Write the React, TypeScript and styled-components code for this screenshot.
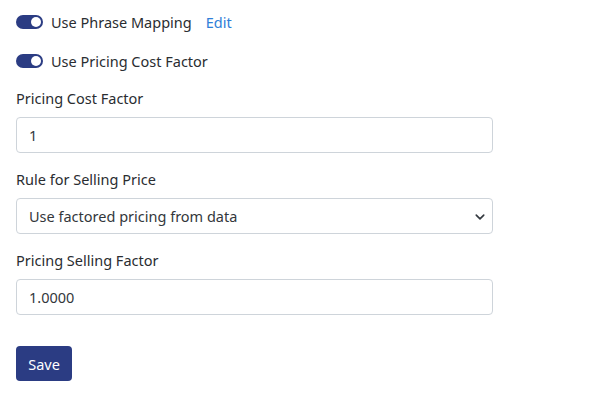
import { createGlobalStyle } from "styled-components";
import styled from "styled-components";

const Global = createGlobalStyle`
  body { margin: 0; background: #fff; font-family: "Noto Sans", "Open Sans", sans-serif; color: #2a2d31; }
  * { box-sizing: border-box; }
`;

const Page = styled.div`
  padding: 11px 16px 16px;
  width: 509px;
`;

const SwitchRow = styled.label<{ $gap: number }>`
  display: flex; align-items: center;
  height: 22px; margin-bottom: ${({ $gap }) => $gap}px;
  font-size: 14.5px; cursor: pointer;
`;

const Track = styled.span`
  position: relative; display: inline-block;
  width: 27px; height: 14px; border-radius: 7px;
  background: #2b3c83; margin-right: 8px; flex: none;
`;

const Knob = styled.span`
  position: absolute; top: 2px; right: 2px;
  width: 10px; height: 10px; border-radius: 50%; background: #fff;
`;

const EditLink = styled.a`
  color: #2f7ed8; margin-left: 14px; text-decoration: none;
`;

const Group = styled.div`
  margin-bottom: 16px;
`;

const Label = styled.div`
  font-size: 14.5px; line-height: 21px; margin-bottom: 8px;
`;

const Field = styled.input`
  display: block; width: 100%; height: 36px;
  padding: 0 12px; border: 1px solid #ced4da; border-radius: 4px;
  font: inherit; font-size: 14.5px; color: #33373b; background: #fff;
`;

const SelectWrap = styled.div`
  position: relative; height: 36px;
  border: 1px solid #ced4da; border-radius: 4px;
  display: flex; align-items: center; padding: 0 12px;
  font-size: 14.5px; color: #33373b;
`;

const Chevron = styled.svg`
  position: absolute; right: 7px; top: 13px;
`;

const SaveBtn = styled.button`
  margin-top: 15px; width: 56px; height: 35px;
  background: #2b3c83; color: #fff; border: none; border-radius: 4px;
  font: inherit; font-size: 14.5px;
`;

function Switch({ label, gap, edit }: { label: string; gap: number; edit?: boolean }) {
  return (
    <SwitchRow $gap={gap}>
      <Track><Knob /></Track>
      {label}
      {edit && <EditLink href="#">Edit</EditLink>}
    </SwitchRow>
  );
}

export default function App() {
  return (
    <Page>
      <Global />
      <Switch label="Use Phrase Mapping" gap={17} edit />
      <Switch label="Use Pricing Cost Factor" gap={16} />
      <Group>
        <Label>Pricing Cost Factor</Label>
        <Field defaultValue="1" />
      </Group>
      <Group>
        <Label>Rule for Selling Price</Label>
        <SelectWrap>
          Use factored pricing from data
          <Chevron width="10" height="10" viewBox="0 0 16 16">
            <path d="M2 5l6 6 6-6" fill="none" stroke="#343a40" strokeWidth="2.6" strokeLinecap="round" strokeLinejoin="round" />
          </Chevron>
        </SelectWrap>
      </Group>
      <Group>
        <Label>Pricing Selling Factor</Label>
        <Field defaultValue="1.0000" />
      </Group>
      <SaveBtn>Save</SaveBtn>
    </Page>
  );
}
